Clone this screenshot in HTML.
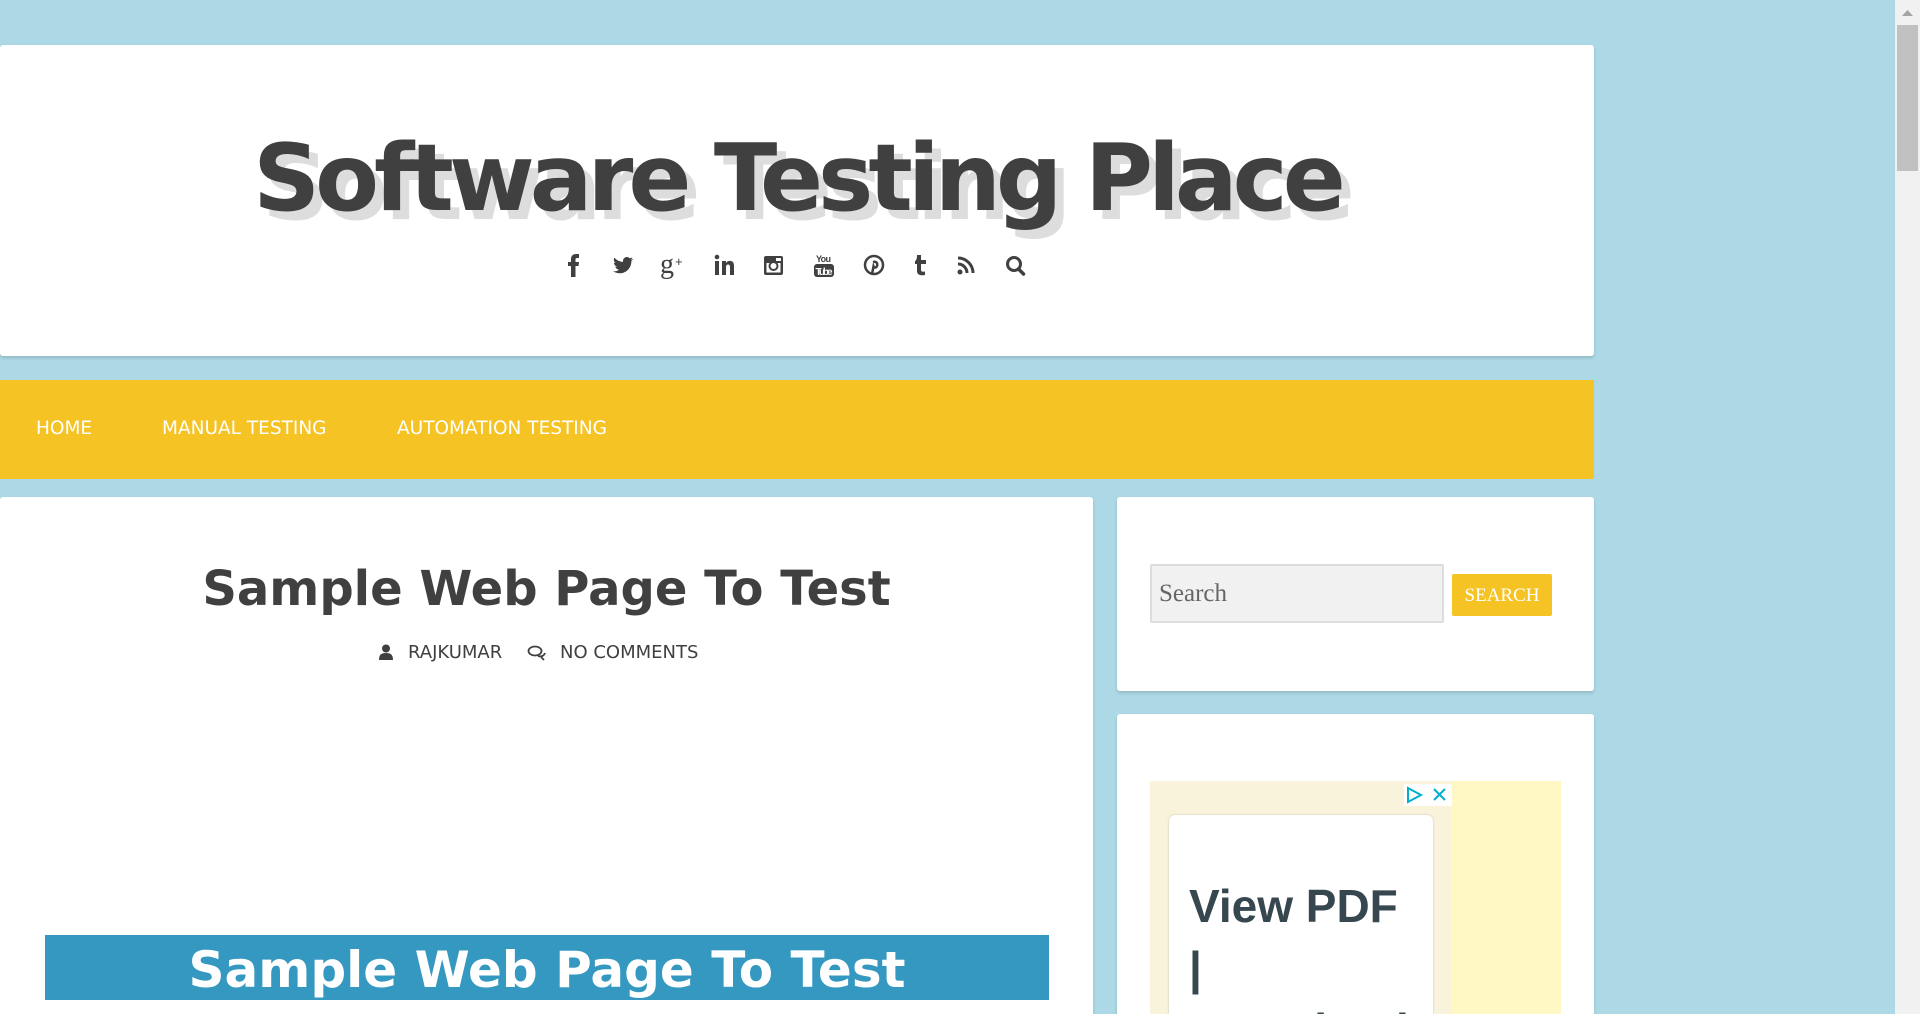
<!DOCTYPE html>
<html><head><meta charset="utf-8">
<style>
*{margin:0;padding:0;box-sizing:border-box}
html,body{width:1920px;height:1014px;overflow:hidden;background:#add8e6;font-family:"DejaVu Sans","Liberation Sans",sans-serif}
#wrap{position:relative;width:1920px;height:1014px;overflow:hidden}
.card{position:absolute;background:#fff;border-radius:3px;box-shadow:0 2px 3px rgba(0,0,0,.15);overflow:hidden}
#head{left:0;top:45px;width:1594px;height:311px}
#title{position:absolute;left:0;width:1594px;top:78px;text-align:center;font-weight:bold;font-size:93px;letter-spacing:-5px;color:#404040;text-shadow:9px 9px 0 #ddd;line-height:110px;white-space:nowrap}
#icons{position:absolute;top:208px;left:0;width:100%;height:30px}
#icons svg{position:absolute;top:0}
#nav{position:absolute;left:0;top:380px;width:1594px;height:99px;background:#f6c325}
#nav span{position:absolute;top:39px;color:#fff;font-size:18.5px;line-height:20px}
#main{left:0;top:497px;width:1093px;height:517px;border-radius:3px 3px 0 0}
#ptitle{position:absolute;top:62px;left:0;width:1093px;text-align:center;font-weight:bold;font-size:48px;color:#404040;line-height:60px}
#meta{position:absolute;top:145px;left:0;width:1093px;font-size:18px;color:#404040}
#banner{position:absolute;left:45px;top:438px;width:1004px;height:65px;background:#3498c0;color:#fff;text-align:center;font-weight:bold;font-size:50px;line-height:70px}
#s1{left:1117px;top:497px;width:477px;height:194px}
#s2{left:1117px;top:714px;width:477px;height:300px;border-radius:3px 3px 0 0}
#inp{position:absolute;left:33px;top:67px;width:294px;height:59px;background:#f1f1f1;border:2px solid #ddd;border-radius:2px;font-family:"Liberation Serif",serif;font-size:25px;color:#666;padding:14px 7px}
#btn{position:absolute;left:335px;top:77px;width:100px;height:42px;background:#f6c325;border-radius:2px;color:#fff;font-family:"Liberation Serif",serif;font-size:19px;text-align:center;line-height:44px}
#ad{position:absolute;left:33px;top:67px;width:411px;height:233px;background:#fff8c4;overflow:hidden}
#adl{position:absolute;left:0;top:0;width:301px;height:233px;background:#f8f3da}
#adc{position:absolute;left:19px;top:34px;width:264px;height:199px;background:#fff;border-radius:6px 6px 0 0;box-shadow:0 0 2px rgba(0,0,0,.2);overflow:hidden}
#adc div{position:absolute;left:20px;top:60px;font-family:"Liberation Sans",sans-serif;font-weight:bold;font-size:46px;color:#37474f;line-height:62px}
#sb{position:absolute;left:1895px;top:0;width:25px;height:1014px;background:#f1f1f1}
#th{position:absolute;left:2px;top:25px;width:21px;height:146px;background:#c1c1c1}
</style></head><body><div id="wrap">
<div class="card" id="head">
<div id="title">Software Testing Place</div>
<div id="icons">
<svg style="left:567px" width="14" height="24" viewBox="0 0 14 24"><path d="M4 24V13H1V9h3V6c0-3 2-5 5-5h3v4H10c-1 0-1.5.5-1.5 1.5V9H12l-.5 4H8.5v11z" fill="#404040"/></svg>
<svg style="left:612px" width="22" height="24" viewBox="0 0 22 24"><path d="M21 6c-.8.3-1.5.5-2.4.6.9-.5 1.5-1.3 1.8-2.3-.8.5-1.7.8-2.6 1-1.6-1.8-4.5-1.7-6 .2-.7.9-1 2.2-.7 3.4C7.6 8.7 4.5 7.1 2.4 4.6 1.3 6.5 1.9 8.9 3.7 10c-.6 0-1.3-.2-1.8-.5 0 2 1.4 3.7 3.3 4.1-.6.2-1.2.2-1.9.1.5 1.7 2.1 2.8 3.8 2.9-1.7 1.4-4 2-6.1 1.7 8.3 5.3 18.6-.5 18.4-10.6.9-.6 1.6-1.3 2.1-2.1z" fill="#404040"/></svg>
<svg style="left:660px" width="30" height="28" viewBox="0 0 30 28"><text x="0" y="20" font-family="Liberation Serif,serif" font-size="28" fill="#404040">g</text><text x="15" y="13" font-family="Liberation Sans,sans-serif" font-size="13" fill="#404040">+</text></svg>
<svg style="left:714px" width="22" height="24" viewBox="0 0 22 24"><rect x="1" y="8" width="4" height="14" fill="#404040"/><circle cx="3" cy="4" r="2.3" fill="#404040"/><path d="M8 8h4v2c1-1.7 3-2.4 5-2 2 .4 3 2 3 5v9h-4v-8c0-1.6-.7-2.5-2-2.5S12 12.5 12 14v8H8z" fill="#404040"/></svg>
<svg style="left:763px" width="22" height="24" viewBox="0 0 22 24"><rect x="1" y="3" width="19" height="19" rx="2" fill="#404040"/><rect x="3.5" y="10" width="14" height="9.5" fill="#fff"/><circle cx="10.5" cy="13" r="5" fill="#404040"/><circle cx="10.5" cy="13" r="3" fill="#fff"/><rect x="13" y="5" width="5" height="3" fill="#fff"/></svg>
<svg style="left:813px" width="22" height="26" viewBox="0 0 22 26"><text x="3" y="9" font-family="Liberation Sans,sans-serif" font-size="9" font-weight="bold" fill="#404040" textLength="15">You</text><rect x="1" y="11" width="20" height="13" rx="3" fill="#404040"/><text x="2.5" y="22" font-family="Liberation Sans,sans-serif" font-size="10" font-weight="bold" fill="#fff" textLength="17">Tube</text></svg>
<svg style="left:863px" width="22" height="24" viewBox="0 0 22 24"><circle cx="11" cy="12" r="9" fill="none" stroke="#404040" stroke-width="2.5"/><path d="M10 9c3-1 5 1 4 4-.7 2-3 2-3.5.5L9 21" fill="none" stroke="#404040" stroke-width="2.5"/></svg>
<svg style="left:913px" width="16" height="24" viewBox="0 0 16 24"><path d="M4 2h4v5h5v4H8v6c0 1.5 1.5 2 4 1.5V22c-5 1-8-.5-8-4v-7H2V8c1.5-.5 2-3 2-6z" fill="#404040"/></svg>
<svg style="left:956px" width="20" height="24" viewBox="0 0 20 24"><circle cx="4" cy="19" r="2.5" fill="#404040"/><path d="M2 11a9 9 0 0 1 9 9M2 5a15 15 0 0 1 15 15" fill="none" stroke="#404040" stroke-width="3"/></svg>
<svg style="left:1005px" width="22" height="24" viewBox="0 0 22 24"><circle cx="9" cy="11" r="6.5" fill="none" stroke="#404040" stroke-width="3"/><path d="M13.5 16l5 5" stroke="#404040" stroke-width="3.5" stroke-linecap="round"/></svg>
</div>
</div>
<div id="nav"><span style="left:36px">HOME</span><span style="left:162px">MANUAL TESTING</span><span style="left:397px">AUTOMATION TESTING</span></div>
<div class="card" id="main">
<div id="ptitle">Sample Web Page To Test</div>
<div id="meta">
<svg style="position:absolute;left:379px;top:2px" width="14" height="16" viewBox="0 0 14 16"><circle cx="7" cy="4.5" r="4" fill="#404040"/><path d="M0 16c0-5 2-7 7-7s7 2 7 7z" fill="#404040"/></svg>
<span style="position:absolute;left:408px;top:0">RAJKUMAR</span>
<svg style="position:absolute;left:527px;top:3px" width="20" height="16" viewBox="0 0 20 16"><ellipse cx="8" cy="6" rx="6.5" ry="4.5" fill="none" stroke="#404040" stroke-width="1.8"/><path d="M11 11c3 1 6 0 7-3" fill="none" stroke="#404040" stroke-width="1.8"/><path d="M14 12l3 3" stroke="#404040" stroke-width="1.8"/></svg>
<span style="position:absolute;left:560px;top:0">NO COMMENTS</span>
</div>
<div id="banner">Sample Web Page To Test</div>
</div>
<div class="card" id="s1"><div id="inp">Search</div><div id="btn">SEARCH</div></div>
<div class="card" id="s2"><div id="ad"><div id="adl"></div>
<svg style="position:absolute;left:254px;top:3px" width="48" height="22" viewBox="0 0 48 22"><rect width="48" height="22" fill="#fff"/><path d="M4 4l13 7-13 7z" fill="none" stroke="#00aecd" stroke-width="2"/><path d="M30 5l11 11M41 5L30 16" stroke="#00aecd" stroke-width="2"/></svg>
<div id="adc"><div>View PDF<br>|<br>Download</div></div></div></div>
<div id="sb"><svg style="position:absolute;left:7px;top:10px" width="11" height="6"><path d="M0 6L5.5 0 11 6z" fill="#a3a3a3"/></svg><div id="th"></div></div>
</div></body></html>
